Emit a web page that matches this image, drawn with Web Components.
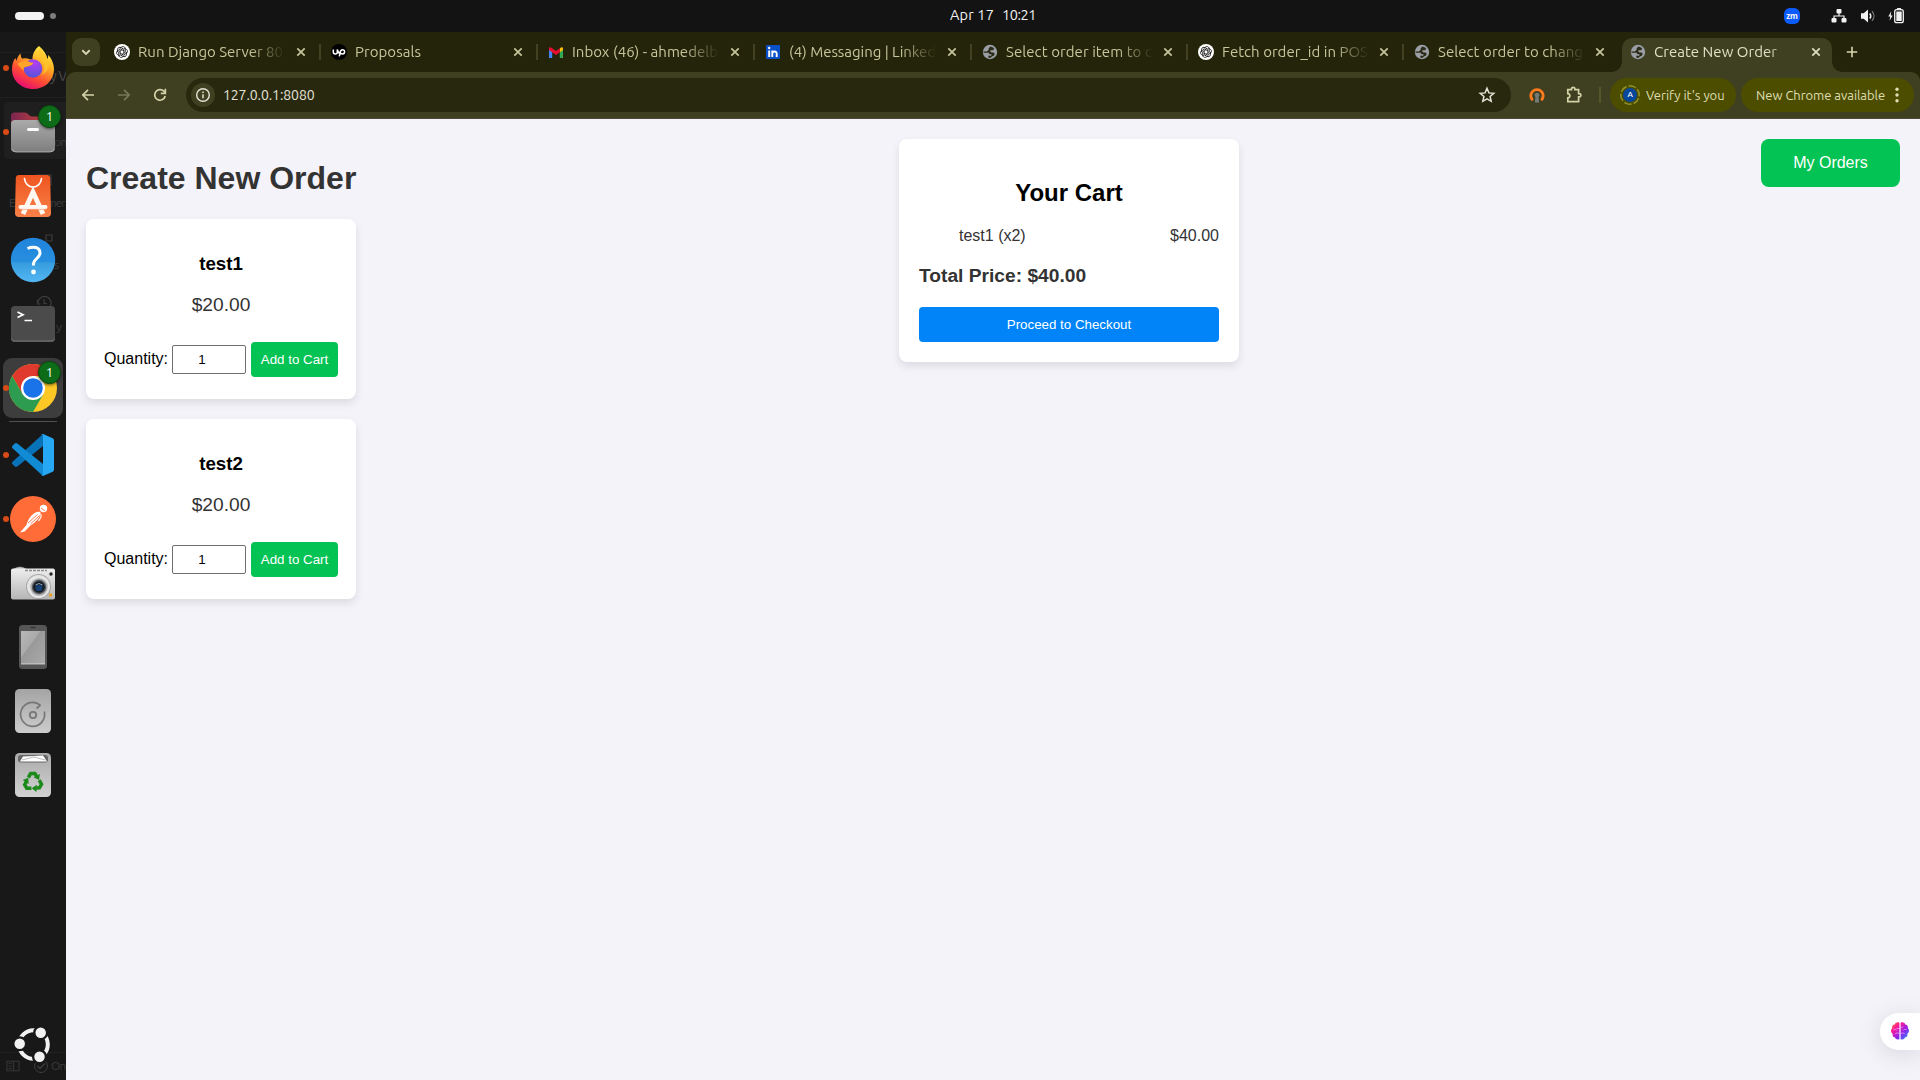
<!DOCTYPE html>
<html lang="en">
<head>
<meta charset="utf-8">
<title>Create New Order</title>
<style>
html,body{margin:0;height:100%;overflow:hidden}
body{font-family:Ubuntu,"Noto Sans",sans-serif;background:#f3f3f9}
</style>
</head>
<body>
<desktop-shell></desktop-shell>
<script>
const GLOBE = `<circle cx="8" cy="8" r="7.200" fill="#9a9fa5"/><path d="M8.300 2.600 6.600 4.400v1.500L4.800 7.500H1.600l-.2 1.300h5.200l1 1.500h1.800v1.400H6.200l.3 2.100 1.800.3 1.600-1.700 2-.6.8-2.200-1.200-1.200H9.600L8.400 7.800V6.300h2.300l1.600-1.300-1.200-1.400z" fill="#2c2c16"/>`;
const GPT = `<circle cx="8" cy="8" r="8" fill="#fff"/><g fill="none" stroke="#222" stroke-width=".85">${[0,60,120,180,240,300].map(a=>`<path transform="rotate(${a} 8 8)" d="M5.600 4.200 8 2.800c1.700-.8 3.400.5 3.300 2.300v3.200L8 10.200"/>`).join('')}</g>`;
const ICONS = {
  gpt:[16,GPT], globe:[16,GLOBE],
  upwork:[16,`<circle cx="8" cy="8" r="8" fill="#000"/><path d="M2.300 5.500v2.500a2 2 0 0 0 4 0V5.500c.6 2.500 1.700 4 3 4.300M8.300 12.300 9.300 8c.3-1.500 1-2.300 2.200-2.300a2.100 2.100 0 1 1 0 4.200c-1.400 0-2.400-.9-3.300-2.200" fill="none" stroke="#fff" stroke-width="1.500"/>`],
  gmail:[16,`<path d="M1 4.500V14h3.200V7z" fill="#4285f4"/><path d="M15 4.500V14h-3.200V7z" fill="#34a853"/><path d="M11.800 4.300 13 3.400c.9-.6 2-.1 2 1v1.500L11.800 8.300z" fill="#fbbc04"/><path d="M1 4.400c0-1.100 1.100-1.600 2-1L8 7.100l3.800-2.800v4L8 11.100 1 5.900z" fill="#ea0d32"/>`],
  linkedin:[16,`<rect x="1" y="1" width="14" height="14" rx="1" fill="#0a50c8"/><path d="M4.200 6.400V13M7.300 6.400V13M7.300 9.500c0-2.600 4.400-2.800 4.400 0V13" fill="none" stroke="#fff" stroke-width="1.900"/><circle cx="4.200" cy="4" r="1.200" fill="#fff"/>`],
  close:[16,`<path d="m4.300 4.300 7.400 7.400m0-7.400-7.400 7.400" stroke="currentColor" stroke-width="1.700"/>`],
  chevron:[16,`<path d="m4.300 6.300 3.700 3.600 3.700-3.600" fill="none" stroke="currentColor" stroke-width="1.900"/>`],
  plus:[16,`<path d="M8 2.800v10.400M2.800 8h10.400" stroke="currentColor" stroke-width="1.600"/>`],
  back:[16,`<path d="M14 8H3M8 2.800 2.800 8 8 13.200" fill="none" stroke="currentColor" stroke-width="1.700"/>`],
  forward:[16,`<path d="M2 8h11M8 2.800 13.200 8 8 13.200" fill="none" stroke="currentColor" stroke-width="1.700"/>`],
  reload:[16,`<path d="M13.200 9A5.300 5.300 0 1 1 11.800 4.200L13.500 6" fill="none" stroke="currentColor" stroke-width="1.700"/><path d="M14.200 1.800v5.400H8.800V5.600h3.700V1.800z" fill="currentColor"/>`],
  info:[16,`<circle cx="8" cy="8" r="6.300" fill="none" stroke="currentColor" stroke-width="1.400"/><path d="M8 7.200v4M8 4.400v1.500" stroke="currentColor" stroke-width="1.500"/>`],
  star:[18,`<path d="m9 2.300 1.900 4.600 4.900.4-3.700 3.200 1.100 4.800L9 12.800l-4.200 2.500 1.100-4.800-3.700-3.200 4.900-.4z" fill="none" stroke="currentColor" stroke-width="1.500"/>`],
  vpn:[16,`<path d="M3.800 13.300a6.200 6.200 0 1 1 8.400 0" fill="none" stroke="#ff7b1c" stroke-width="2.800"/><path d="M8 5.700a2.400 2.400 0 0 1 1.500 4.300l.7 5.500H5.800l.7-5.500A2.400 2.400 0 0 1 8 5.700z" fill="#777b78"/>`],
  puzzle:[18,`<path d="M2.800 3.700h3.700V3a1.700 1.700 0 0 1 3.400 0v.7h3.700v4h.7a1.600 1.600 0 0 1 0 3.200h-.7v4.800H2.800v-3.900c2.700 0 2.700-4.200 0-4.200z" fill="none" stroke="currentColor" stroke-width="1.700"/>`],
  dots:[18,`<g fill="currentColor"><circle cx="9" cy="3.200" r="1.700"/><circle cx="9" cy="9" r="1.700"/><circle cx="9" cy="14.800" r="1.700"/></g>`],
  ring:[20,`<circle cx="10" cy="10" r="9.200" fill="none" stroke="#92922c" stroke-width="1.500" stroke-dasharray="7.500 2.130" transform="rotate(20 10 10)"/>`],
  net:[16,`<g fill="#f2f2f2"><rect x="5.500" y="1" width="5" height="4.500" rx="1"/><rect x=".5" y="10" width="5" height="4.500" rx="1"/><rect x="10.500" y="10" width="5" height="4.500" rx="1"/></g><path d="M8 5v3M3 10.500V8h10v2.500" fill="none" stroke="#f2f2f2" stroke-width="1.200"/>`],
  sound:[16,`<path d="M1 5.300h2.700L8 1.500v13l-4.300-3.800H1z" fill="#f2f2f2"/><path d="M9.700 5.500a3.500 3.500 0 0 1 0 5" fill="none" stroke="#f2f2f2" stroke-width="1.600"/><path d="M12 3.200c2.600 2.800 2.600 6.800 0 9.600" fill="none" stroke="#777" stroke-width="1.300"/>`],
  battery:[16,`<path d="M3.300 3.200.3 8.500h2l-.8 4.300 3.200-5.200h-2z" fill="#f2f2f2"/><rect x="6.700" y="1.700" width="8.600" height="13" rx="2" fill="none" stroke="#f2f2f2" stroke-width="1.300"/><rect x="8.300" y="3.500" width="5.400" height="9.500" fill="#f2f2f2"/><path d="M9 .8h4" stroke="#f2f2f2" stroke-width="1.500"/>`],
  brain:[20,`<defs><linearGradient id="b" x1="0" y1="0" x2="1" y2="1"><stop offset="0" stop-color="#ff8a1c"/><stop offset=".28" stop-color="#ff1897"/><stop offset=".62" stop-color="#9020ec"/><stop offset="1" stop-color="#189df5"/></linearGradient></defs><path d="M9.400 1.800v16.400c-2.200.6-4-.2-4.400-1.800-2-.2-2.900-1.700-2.300-3.500C.6 11.500.5 8.600 2.100 7.300 1.800 5 3 3.700 4.700 3.600 5.300 1.600 7.800.8 9.400 1.800z M10.600 1.800v16.400c2.200.6 4-.2 4.400-1.800 2-.2 2.900-1.700 2.300-3.500 2.100-1.400 2.200-4.300.6-5.600.3-2.300-.9-3.600-2.600-3.700C14.700 1.600 12.200.8 10.600 1.800z" fill="url(#b)"/><path d="M3.500 8.500c1.500-.5 2.500 0 3.300 1M9 7.500H6.500M9 12.500c-1.500-.8-3-.8-4 .7M16.500 8.500c-1.500-.5-2.500 0-3.300 1M11 7.500l2-2M11 12.500c1.500-.8 3-.8 4 .7" fill="none" stroke="#f5b5f5" stroke-width=".7"/>`],
  ghostpanel:[16,`<path d="M1 2.500h14v11H1zM8.500 2.500v11M3 5h3.500M3 8h3.500M3 11h3.500" fill="none" stroke="currentColor"/>`],
  ghostcheck:[16,`<circle cx="8" cy="8" r="6.500" fill="none" stroke="currentColor"/><path d="m4.500 8 2.500 2.500 5-5" fill="none" stroke="currentColor" stroke-width="1.400"/>`],
  ghostclock:[16,`<path d="M1.500 5v4h3M2 8a6.500 6.500 0 1 1 2.500 5.100M8 4v4.500h3" fill="none" stroke="currentColor" stroke-width="1.200"/>`],
  ghostscreen:[16,`<path d="M1 2h14v10H1zM5 15h6" fill="none" stroke="currentColor" stroke-width="1.200"/>`],
  ghostboxes:[16,`<path d="M9 1h6v6H9zM2 9h6v6H2z" fill="none" stroke="currentColor" stroke-width="1.200"/>`],
  /* launcher icons */
  firefox:[48,`<defs><linearGradient id="f" x1=".8" y1=".05" x2=".3" y2="1"><stop offset="0" stop-color="#fff04a"/><stop offset=".35" stop-color="#ffae22"/><stop offset=".68" stop-color="#ff4b35"/><stop offset="1" stop-color="#e50a74"/></linearGradient><radialGradient id="fp" cx=".6" cy=".2" r=".8"><stop offset="0" stop-color="#b43df4"/><stop offset="1" stop-color="#5554d8"/></radialGradient></defs><path d="M30 2c5 4.500 8 9 8.400 13 .9-1.300.8-2.400.7-4C42.500 14 45.200 20 45 26c-.5 11-9.500 19-21 19S3 36.500 3 25.500c0-5.500 1.300-9 3.500-11.500l1 3c.8-3.500 2.300-6 4.200-7.500-.2 2.400.4 4.200 1.500 5.200 2.800-.8 5.300-.4 7.500.5l2.800.3C23.300 10 26 5 30 2z" fill="url(#f)"/><circle cx="24" cy="24.500" r="9.300" fill="url(#fp)"/><path d="M8.500 20c4.500-3.500 9.500-3.600 13-1.500l3 .3c-1.200 2.500-4 3.700-7 3.900-3 .3-3.200 1.900-2.600 4.300C12 25 10.500 22 8.500 20z" fill="#ffa329"/><path d="M31 4c-3.500 6-1 10 2.500 14 3.400 4 1.500 10-1.500 13 6.500-2 8.600-8 7-14-1.400-5-5-8-8-13z" fill="#ffc62d" opacity=".75"/>`],
  files:[48,`<defs><linearGradient id="fg" x2="0" y2="1"><stop stop-color="#aaa"/><stop offset="1" stop-color="#7e7e7e"/></linearGradient><linearGradient id="fr"><stop stop-color="#7b2651"/><stop offset="1" stop-color="#d34b35"/></linearGradient></defs><path d="M2 20V8q0-3.500 3.500-3.500H16q2 0 3.500 2t3.500 2H42q4 0 4 4v14H2z" fill="url(#fr)"/><rect x="2" y="12" width="44" height="32" rx="4" fill="url(#fg)"/><path d="M3 41q1 3 4 3h34q3 0 4-3" fill="none" stroke="#c9c9c9" stroke-width=".7"/><path d="M19.500 21.500h9" stroke="#fff" stroke-width="3" stroke-linecap="round"/>`],
  software:[48,`<defs><linearGradient id="sw" x2="0" y2="1"><stop stop-color="#ee5520"/><stop offset="1" stop-color="#fa8148"/></linearGradient></defs><path d="M10 3h28q3 0 3.200 3L42 41q0 4-4 4H10q-4 0-4-4L6.800 6Q7 3 10 3z" fill="url(#sw)"/><path d="M15.500 6.500c1 11.500 16 11.500 17 0" fill="none" stroke="#fff" stroke-width="1.700" stroke-linecap="round"/><path d="M14 42 24 20l10 22" fill="none" stroke="#fff7f2" stroke-width="4.800"/><path d="M11.500 35h25" stroke="#fff7f2" stroke-width="4" stroke-linecap="round"/><path d="M11 37.400h26" stroke="#f7aa86" stroke-width=".8"/>`],
  help:[48,`<defs><linearGradient id="h" x2="0" y2="1"><stop stop-color="#2184db"/><stop offset=".55" stop-color="#278fe0"/><stop offset=".56" stop-color="#379cde"/><stop offset="1" stop-color="#54b7f4"/></linearGradient></defs><circle cx="24" cy="24" r="22.200" fill="url(#h)"/><path d="M18.500 12.500c5.500-2.500 12.500-1.500 12.500 4.500 0 5-6.500 6-6.500 11v1.500" fill="none" stroke="#fff" stroke-width="3"/><circle cx="24.500" cy="36" r="2.400" fill="#fff"/>`],
  terminal:[48,`<rect x="2" y="6" width="44" height="36" rx="4" fill="#4b4b4b"/><path d="M2 38q0 4 4 4h36q4 0 4-4v-2q0 4-4 4H6q-4 0-4-4z" fill="#606060"/><path d="m8.500 12 5.500 2.700-5.500 2.700M15.500 20.500h7.500" fill="none" stroke="#fff" stroke-width="1.700"/>`],
  chrome:[48,`<circle cx="24" cy="24" r="24" fill="#fdc726"/><path d="M3.200 12A24 24 0 0 1 44.800 12H24L13.600 30z" fill="#e03a2f"/><path d="M3.200 12 13.600 30l10.400 6 10.400-6L24 48A24 24 0 0 1 3.200 12z" fill="#2d9c50"/><circle cx="24" cy="24" r="12" fill="#fff"/><circle cx="24" cy="24" r="9.800" fill="#1a73e8"/>`],
  vscode:[48,`<path d="M34 3 3.300 31q-.8 1 0 2l2.500 2.500q1 .8 2.500 0L34 15z" fill="#0872b8"/><path d="M34 45 3.300 17q-.8-1 0-2l2.500-2.500q1-.8 2.500 0L34 33z" fill="#108bd4"/><path d="m34 3 9.700 4.200q1.300.8 1.300 2.300v29q0 1.500-1.300 2.300L34 45q-1 0-2-1 2 1 2-1V5q0-2-2-1 1-1 2-1z" fill="#27a8f4"/>`],
  postman:[48,`<circle cx="24" cy="24" r="23" fill="#ff6c37"/><circle cx="34.500" cy="13.500" r="3.700" fill="#fff"/><path d="M31.500 17c-3-1-6 .5-9 3.500-2.700 2.700-4.200 6-5 9.500L11 37.500l4.500-1 6.500-6.500c4.500-2.500 9.500-7 9.500-13z" fill="#fff"/><path d="m19 28 9.500-8.500M21.500 29 30.500 20.500M32 13l4 3" stroke="#ff6c37" stroke-width=".9"/><path d="M31.500 19c1.500 1.500.5 4-2 7" fill="none" stroke="#fff" stroke-width="1.200"/>`],
  camera:[48,`<defs><linearGradient id="ca" x2="0" y2="1"><stop stop-color="#eee"/><stop offset="1" stop-color="#b5b5b5"/></linearGradient></defs><path d="M5 10q6-4 12 0z" fill="#d5d5d5" stroke="#999" stroke-width=".6"/><rect x="2" y="9.500" width="44" height="31" rx="2" fill="url(#ca)"/><path d="M16 11.500h22" stroke="#8a8a8a" stroke-width="1.500" stroke-dasharray="3 1"/><circle cx="29.500" cy="27.500" r="12.500" fill="#a5a5a5"/><circle cx="29.500" cy="27.500" r="11.500" fill="#e5e5e5"/><circle cx="30" cy="28" r="8.700" fill="#aaa"/><circle cx="30" cy="28" r="7.200" fill="#50565c"/><circle cx="30" cy="28" r="5.800" fill="#16191d"/><rect x="26.500" y="26" width="7" height="6" rx="2" fill="#153e72"/><path d="M26.500 26q3.500-3 7 0" stroke="#8fa5bd" fill="none"/><circle cx="42" cy="15" r="1.700" fill="#222"/><rect x="40" y="34.500" width="3" height="3" fill="#e9a128"/>`],
  phone:[48,`<defs><linearGradient id="ph" x2="1" y2="1"><stop stop-color="#b8b8b8"/><stop offset=".4" stop-color="#aaa"/><stop offset=".41" stop-color="#999"/><stop offset="1" stop-color="#aaa"/></linearGradient></defs><rect x="10" y="2" width="28" height="44" rx="3.500" fill="#565656"/><rect x="12" y="8" width="24" height="33" fill="url(#ph)"/><path d="M12 41h24" stroke="#eee" stroke-width=".7"/><path d="M21.500 4.500h5" stroke="#333" stroke-width="1.300"/>`],
  disk:[48,`<defs><linearGradient id="dg" x2="0" y2="1"><stop stop-color="#a4a4a4"/><stop offset="1" stop-color="#ccc"/></linearGradient></defs><rect x="6" y="2" width="36" height="44" rx="4.500" fill="url(#dg)"/><path d="M31.500 18.300A12 12 0 1 0 35.300 24.500M27.500 21.500 31.500 18" fill="none" stroke="#777" stroke-width="1.700"/><circle cx="24" cy="28" r="3.200" fill="none" stroke="#777" stroke-width="1.800"/>`],
  trash:[48,`<defs><linearGradient id="tg" x2="0" y2="1"><stop stop-color="#aaa"/><stop offset="1" stop-color="#d2d2d2"/></linearGradient></defs><rect x="6" y="2" width="36" height="44" rx="4.500" fill="url(#tg)"/><rect x="9" y="4" width="30" height="7.500" rx="3" fill="#666"/><path d="m11 10.500 3-5 20-1 4 6z" fill="#fff"/><path d="m13 9 12-3 11 3" fill="none" stroke="#aaa" stroke-width=".8"/>${[0,120,240].map(a=>`<g transform="rotate(${a} 24 31)"><path d="m19.300 26.500 2.400-4h4.200l1.700 2.800" fill="none" stroke="#1b8a1b" stroke-width="3.500"/><path d="m24.500 26.300 6.400-3.300-.8 6z" fill="#1b8a1b"/></g>`).join('')}`],
  ubuntu:[48,`<circle cx="24.500" cy="24.500" r="14.300" fill="none" stroke="#f2f2f2" stroke-width="4"/><g fill="#f2f2f2" stroke="#181818" stroke-width="2.300"><circle cx="31.700" cy="12.700" r="6.400"/><circle cx="10.700" cy="23.700" r="6.400"/><circle cx="30.500" cy="36.700" r="6.400"/></g>`]
};

/* Registers an element whose shadow root is filled from a template function. */
function define(name, css, html, after){
  customElements.define(name, class extends HTMLElement{
    connectedCallback(){
      if(this.shadowRoot) return;
      const root = this.attachShadow({mode:'open'});
      root.innerHTML = `<style>*{box-sizing:border-box}${css}</style>${typeof html==='function'?html(this):html}`;
      if(after) after(this, root);
    }
  });
}

define('ui-icon', `:host{display:block;flex:none;line-height:0}svg{display:block}`, el=>{
  const [box, art] = ICONS[el.getAttribute('name')], s = el.getAttribute('size')||box;
  return `<svg width="${s}" height="${s}" viewBox="0 0 ${box} ${box}">${art}</svg>`;
});

/* A single line of text tracked so that it spans a given advance width. */
define('fit-text', `:host{display:block;flex:none;white-space:pre}span{display:inline-block}`,
  el=>`<span>${el.getAttribute('text')}</span>`,
  (el, root)=>{
    const span = root.querySelector('span'), n = el.getAttribute('text').length;
    const w = span.getBoundingClientRect().width;
    span.style.letterSpacing = ((+el.getAttribute('width') - w)/n).toFixed(3)+'px';
  });

define('top-bar', `
:host{display:flex;height:32px;background:#131313;color:#f2f2f2;align-items:center;padding:0 16px 0 15px;font-size:14.500px}
.left,.right{flex:1;display:flex;align-items:center}
.pill{width:29px;height:8px;border-radius:4px;background:#f2f2f2;margin-right:6px}
.dot{width:6px;height:6px;border-radius:3px;background:#7d7d7d}
.clock{display:flex;gap:8px;width:86px;height:20px;line-height:20px;margin-top:-2px;margin-left:67px}
.right{justify-content:flex-end}
.zm{width:16px;height:16px;border-radius:6px;background:#0b5cff;font:bold 8px/15px "Noto Sans",sans-serif;text-align:center;margin-right:31px}
.right ui-icon+ui-icon{margin-left:12.500px}`,
`<div class="left"><div class="pill"></div><div class="dot"></div></div>
<div class="clock"><fit-text text="Apr 17" width="44"></fit-text><fit-text text="10:21" width="34"></fit-text></div>
<div class="right"><div class="zm">zm</div><ui-icon name="net"></ui-icon><ui-icon name="sound"></ui-icon><ui-icon name="battery"></ui-icon></div>`);

define('dock-item', `
:host{display:flex;position:relative;height:64px;width:66px;align-items:center;justify-content:center;flex:none}
.tile{width:60px;height:60px;border-radius:9px;display:flex;align-items:center;justify-content:center}
:host([active]) .tile{background:#3d3d3d}
.run{position:absolute;left:3px;top:29px;width:6px;height:6px;border-radius:3px;background:#d84a17}
.badge{position:absolute;left:38px;top:5px;width:23px;height:23px;border-radius:50%;background:#0d6c18;border:1px solid #0a4a10;color:#fff;text-align:center;font-size:13px;line-height:21px;box-shadow:0 1px 3px #0008}
`, el=>`<div class="tile"><ui-icon name="${el.getAttribute('icon')}"></ui-icon></div>
${el.hasAttribute('running')?'<div class="run"></div>':''}${el.hasAttribute('badge')?`<div class="badge">${el.getAttribute('badge')}</div>`:''}`);

define('app-dock', `
:host{display:flex;flex-direction:column;position:relative;width:66px;flex:none;background:#181818;padding:4px 0;overflow:hidden;color:#3d3d3d}
hr{width:48px;height:1px;border:0;margin:1px 9px;background:#505050;flex:none}
.grow{flex:1}
.under{position:absolute;white-space:nowrap;font-size:12px;line-height:18px;letter-spacing:-.8px}
.line{position:absolute;left:0;width:66px;height:1px;background:#202020}
.sel{position:absolute;left:4px;top:70px;width:62px;height:57px;background:#1f1f1f;border-radius:4px 0 0 4px}`,
`<div class="line" style="top:20px"></div><div class="line" style="top:65px"></div><div class="sel"></div>
<div class="under" style="left:50px;top:35px;font-size:14px;color:#4a4a4a">y V</div>
<div class="under" style="left:54px;top:101px">on</div>
<div class="under" style="left:9px;top:162px">E</div><div class="under" style="left:47px;top:162px;font-size:11px">mer</div>
<div class="under" style="left:54px;top:224px">s</div><div class="under" style="left:56px;top:286px">y</div>
<ui-icon class="under" name="ghostscreen" style="left:36px;top:141px"></ui-icon>
<ui-icon class="under" name="ghostboxes" style="left:37px;top:202px"></ui-icon>
<ui-icon class="under" name="ghostclock" style="left:36px;top:263px"></ui-icon>
<ui-icon class="under" name="ghostpanel" size="14" style="left:6px;top:1027px"></ui-icon>
<ui-icon class="under" name="ghostcheck" style="left:33px;top:1026px"></ui-icon>
<div class="line" style="top:1020px"></div>
<div class="under" style="left:51px;top:1025px">On</div>
<dock-item icon="firefox" running></dock-item><dock-item icon="files" running badge="1"></dock-item>
<dock-item icon="software"></dock-item><dock-item icon="help"></dock-item><dock-item icon="terminal"></dock-item>
<dock-item icon="chrome" running active badge="1"></dock-item><hr>
<dock-item icon="vscode" running></dock-item><dock-item icon="postman" running></dock-item>
<dock-item icon="camera"></dock-item><dock-item icon="phone"></dock-item><dock-item icon="disk"></dock-item><dock-item icon="trash"></dock-item>
<div class="grow"></div><dock-item icon="ubuntu"></dock-item>`);

define('browser-tab', `
:host{display:flex;align-items:center;width:217px;height:28px;padding-left:10px;flex:none;color:#c6c69c;font-size:15px;position:relative}
:host([narrow]){width:216px}
.label{margin-left:8px;width:147px;overflow:hidden;line-height:24px;margin-top:-1px;-webkit-mask-image:linear-gradient(90deg,#000 112px,transparent 147px)}
.x{margin-left:8px}
:host([narrow]) .x{margin-left:7px}
.sep{width:2px;height:16px;background:#424222;margin-left:10px}
:host([last]) .sep{display:none}
:host([active]){width:210px;height:34px;padding-bottom:6px;margin-bottom:-6px;background:#3f3f21;border-radius:10px 10px 0 0;color:#e0e0c6;padding-left:8.500px;margin-left:1.500px}
:host([active]) .x{margin-left:7px}
:host([active]) .sep{display:none}
:host([active])::before,:host([active])::after{content:"";position:absolute;bottom:0;width:10px;height:10px}
:host([active])::before{left:-10px;background:radial-gradient(circle at 0 0,transparent 9.500px,#3f3f21 10px)}
:host([active])::after{right:-10px;background:radial-gradient(circle at 100% 0,transparent 9.500px,#3f3f21 10px)}`,
el=>`<ui-icon name="${el.getAttribute('icon')}"></ui-icon><div class="label"><fit-text text="${el.getAttribute('label')}" width="${el.getAttribute('w')}"></fit-text></div><ui-icon class="x" name="close"></ui-icon><div class="sep"></div>`);

define('tab-strip', `
:host{display:flex;height:40px;background:#24240a;padding:6px 6px 0;color:#d6d6b0}
.menu{width:28px;height:28px;border-radius:9px;background:#3f3f21;display:flex;align-items:center;justify-content:center;margin-right:4px;flex:none}
.plus{margin:6px 0 0 12px}`,
`<div class="menu"><ui-icon name="chevron"></ui-icon></div>
<browser-tab icon="gpt" label="Run Django Server 80" w="145"></browser-tab>
<browser-tab icon="upwork" label="Proposals" w="66"></browser-tab>
<browser-tab icon="gmail" label="Inbox (46) - ahmedelb" w="146"></browser-tab>
<browser-tab icon="linkedin" label="(4) Messaging | Linked" w="147"></browser-tab>
<browser-tab icon="globe" label="Select order item to c" w="146" narrow></browser-tab>
<browser-tab icon="gpt" label="Fetch order_id in POS" w="146" narrow></browser-tab>
<browser-tab icon="globe" label="Select order to chang" w="145" narrow last></browser-tab>
<browser-tab icon="globe" label="Create New Order" w="123" active></browser-tab>
<ui-icon class="plus" name="plus"></ui-icon>`);

define('tool-bar', `
:host{display:block;background:#24240a}
.bar{display:flex;align-items:center;height:47px;background:#3f3f21;border-bottom:1px solid #4b4b38;border-radius:9px 9px 0 0;color:#d2d2a8;padding:0 6px 0 14px}
.nav{display:flex;gap:20px;margin-right:18px}
.off{color:#77775a}
.omni{display:flex;align-items:center;width:1325px;height:34px;border-radius:17px;background:#28280f;padding:0 15px 0 5px;color:#e5e3d6;font-size:14px}
.site{width:24px;height:24px;border-radius:12px;background:#3f3f21;display:flex;align-items:center;justify-content:center;margin-right:8px}
.grow{flex:1}
.sep{width:2px;height:16px;background:#55552c;margin:0 9px 0 16.500px}
.chip{display:flex;align-items:center;height:34px;border-radius:17px;background:#4d4d00;color:#dedeb2;font-size:13px;line-height:20px}
.av{display:grid;place-items:center;width:20px;height:20px;margin-right:6px}
.av>*{grid-area:1/1}
.av b{width:14px;height:14px;border-radius:50%;background:#07479c;color:#fff;font-size:8px;line-height:14px;text-align:center;font-weight:500}
`,
`<div class="bar"><div class="nav"><ui-icon name="back"></ui-icon><ui-icon class="off" name="forward"></ui-icon><ui-icon name="reload"></ui-icon></div>
<div class="omni"><div class="site"><ui-icon name="info"></ui-icon></div><fit-text text="127.0.0.1:8080" width="91.500"></fit-text><div class="grow"></div><ui-icon name="star"></ui-icon></div>
<ui-icon name="vpn" style="margin-left:18px"></ui-icon><ui-icon name="puzzle" style="margin-left:20px"></ui-icon><div class="sep"></div>
<div class="chip" style="width:126px;padding-left:10px"><div class="av"><ui-icon name="ring"></ui-icon><b>A</b></div><fit-text text="Verify it's you" width="78.500"></fit-text></div>
<div class="chip" style="width:173px;padding-left:15px;margin-left:5px"><fit-text text="New Chrome available" width="129"></fit-text><ui-icon name="dots" style="margin-left:3px"></ui-icon></div></div>`);

define('action-button', `
:host{display:block}
button{display:block;width:100%;height:35px;border:0;border-radius:4px;padding:0;font:13.333px/35px "Liberation Sans",sans-serif;background:var(--fill,#02c353);color:#fff;text-align:center}
:host([large]) button{height:48px;border-radius:8px;font-size:16px;line-height:18px;padding-bottom:0}`,
`<button><slot></slot></button>`);

define('product-card', `
:host{display:block;width:270px;height:180px;background:#fff;border-radius:8px;box-shadow:0 4px 8px rgba(0,0,0,.1);text-align:center;padding-top:34px;margin-bottom:20px}
h3{margin:0;font-size:18.720px;line-height:22px;color:#000}
p{margin:19px 0 0;font-size:19.200px;line-height:22px;color:#333}
.row{display:flex;align-items:center;margin-top:26px;padding-left:18px;height:35px}
label{font-size:16px;line-height:20px;width:68px;text-align:left;margin-top:-2px}
input{width:74px;height:29px;border:1px solid #6f6f6f;border-radius:2px;padding:1px 21px 1px 7px;font:13.333px "Liberation Sans",sans-serif;text-align:center;margin:0 5px 0 0;background:#fff;color:#000}
action-button{width:87px}`,
el=>`<h3>${el.getAttribute('name')}</h3><p>${el.getAttribute('price')}</p><div class="row"><label>Quantity:</label><input type="text" value="1"><action-button>Add to Cart</action-button></div>`);

define('cart-panel', `
:host{display:block;width:340px;height:223px;background:#fff;border-radius:8px;box-shadow:0 4px 8px rgba(0,0,0,.1);padding:40px 20px 20px}
h2{margin:0;font-size:24px;line-height:28px;text-align:center;color:#000}
.item{display:flex;justify-content:space-between;padding-left:40px;margin-top:20px;font-size:16px;line-height:18px;color:#333}
.total{font-weight:bold;font-size:19.200px;line-height:22px;margin:20px 0;color:#333}
action-button{--fill:#0084f8}`,
`<h2>Your Cart</h2><div class="item"><span>test1 (x2)</span><span>$40.00</span></div><div class="total">Total Price: $40.00</div><action-button>Proceed to Checkout</action-button>`);

define('order-page', `
:host{display:flex;flex:1;position:relative;justify-content:space-between;align-items:flex-start;background:#f3f3f9;padding:20px;font-family:"Liberation Sans",Arial,sans-serif;color:#000}
h1{margin:21px 0 22px;font-size:32px;line-height:37px;color:#333;white-space:nowrap}
section{width:270px}
cart-panel{margin-left:21px}
.side{width:139px}
.fab{position:absolute;right:0;top:894px;width:40px;height:37px;border-radius:19px 0 0 19px;background:#fff;box-shadow:0 4px 24px rgba(0,0,0,.12);display:flex;align-items:center;padding:0 0 1px 10px}`,
`<section><h1>Create New Order</h1><product-card name="test1" price="$20.00"></product-card><product-card name="test2" price="$20.00"></product-card></section>
<cart-panel></cart-panel><action-button class="side" large>My Orders</action-button>
<div class="fab"><ui-icon name="brain"></ui-icon></div>`);

define('desktop-shell', `
:host{display:flex;flex-direction:column;width:1920px;height:1080px;overflow:hidden}
main{display:flex;flex:1;min-height:0}
.win{display:flex;flex-direction:column;flex:1;min-width:0}`,
`<top-bar></top-bar><main><app-dock></app-dock><div class="win"><tab-strip></tab-strip><tool-bar></tool-bar><order-page></order-page></div></main>`);
</script>
</body>
</html>
